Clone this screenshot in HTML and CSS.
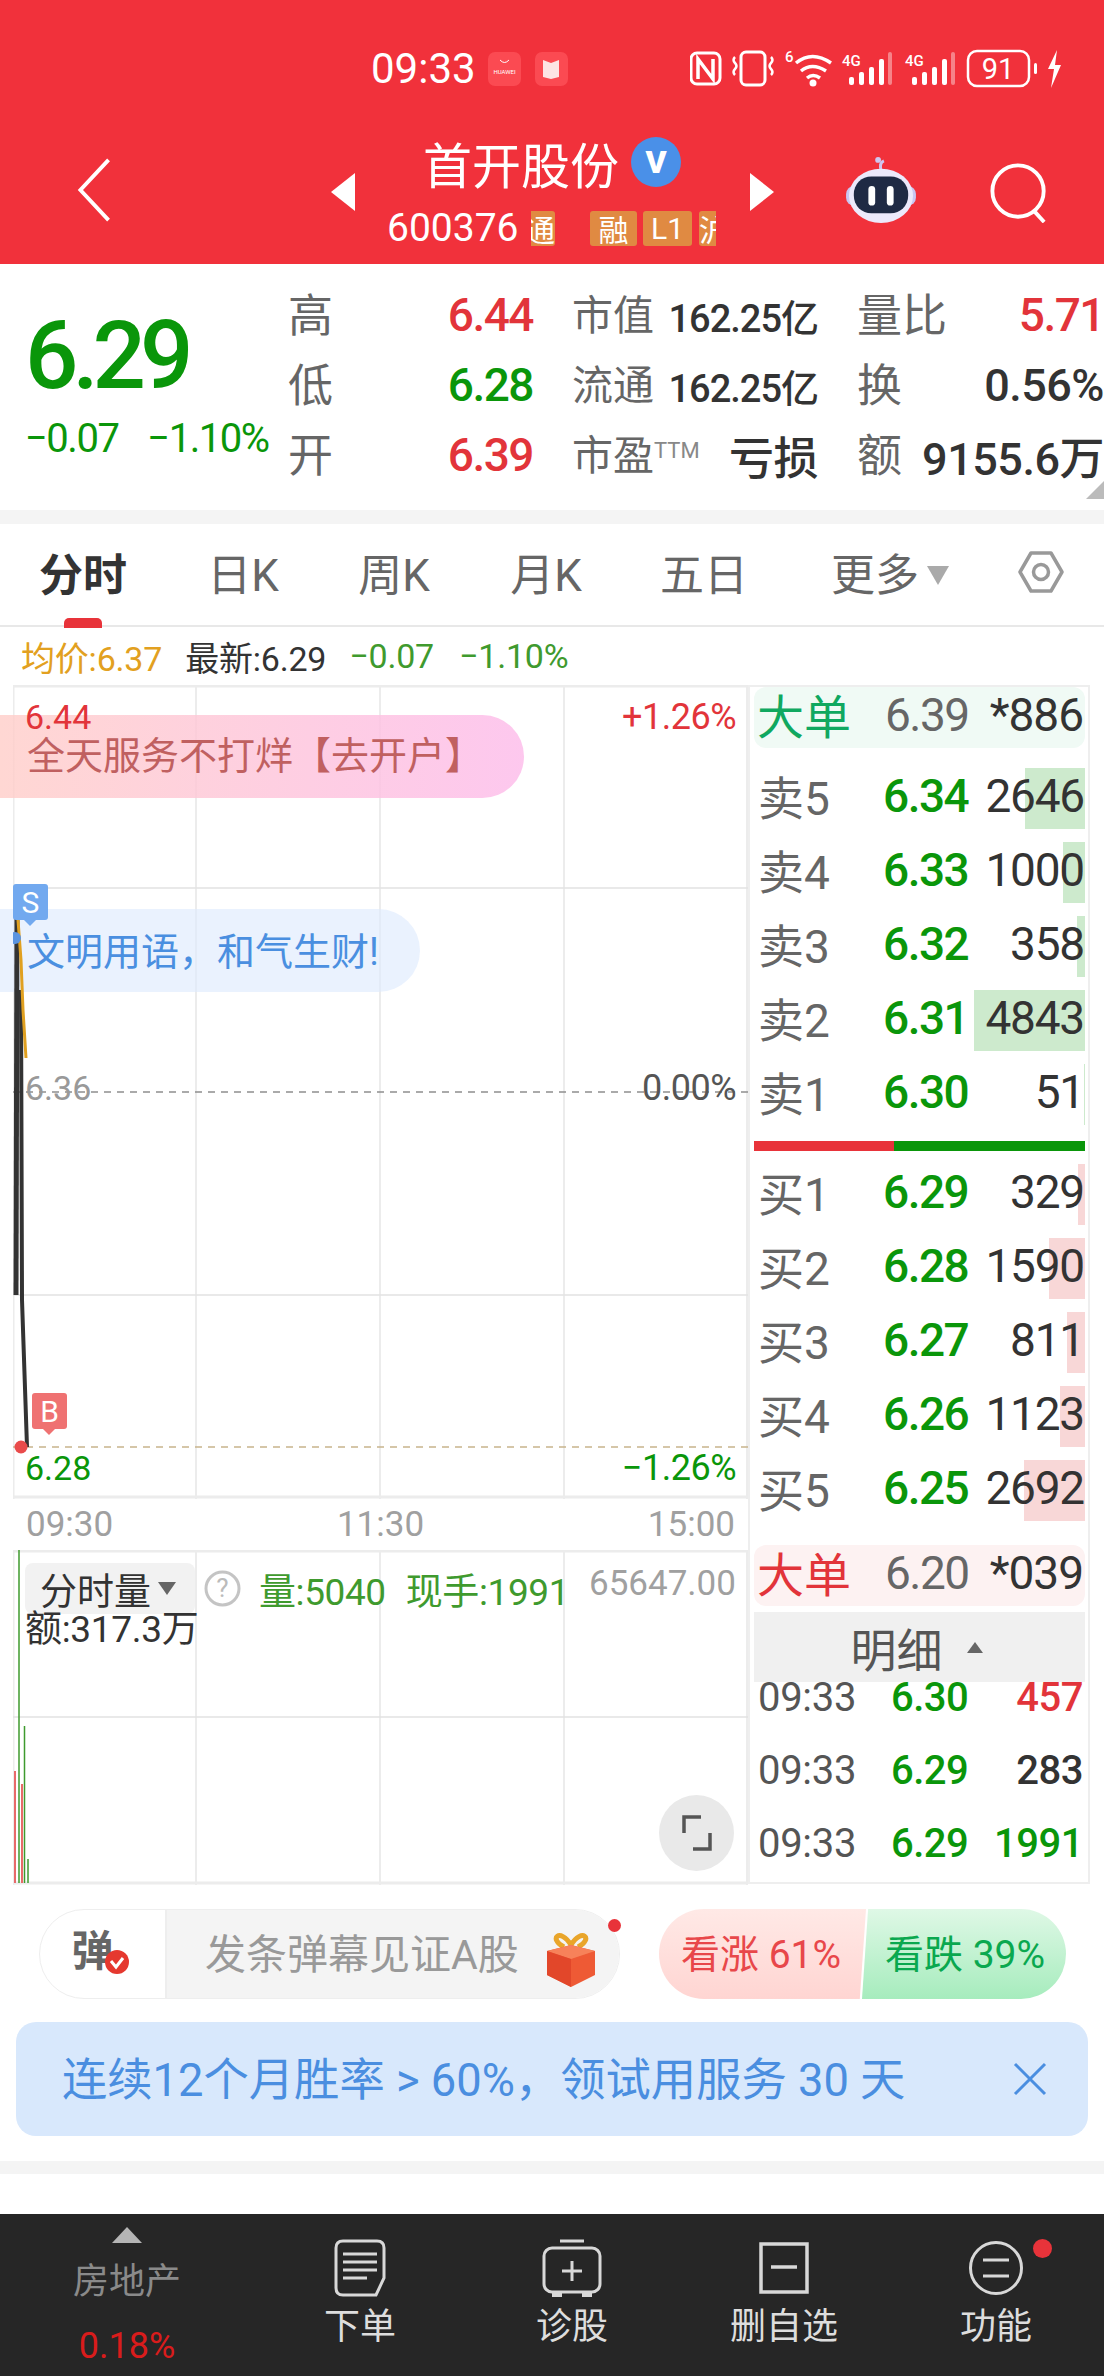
FILE: index.html
```html
<!DOCTYPE html>
<html lang="zh-CN">
<head>
    <meta charset="UTF-8">
    <meta name="viewport" content="width=device-width, initial-scale=1.0">
    <title>首开股份</title>
    <link rel="stylesheet" href="styles.css">
</head>
<body>
    <header class="header">
        <div class="status-bar">
            <span class="clock">09:33</span>
            <svg class="app-icon" width="33" height="34" viewBox="0 0 33 34">
                <rect width="33" height="34" rx="7" fill="#fb4a52"/>
                <path d="M12 8q4.500 5 9 0" fill="none" stroke="#fff" stroke-width="1"/>
                <text x="16.500" y="22" class="tiny" text-anchor="middle">HUAWEI</text>
            </svg>
            <svg class="app-icon" width="33" height="34" viewBox="0 0 33 34">
                <rect width="33" height="34" rx="7" fill="#fb4a52"/>
                <path d="M8 8l8 3 8-3v17l-8 2-8-2z" fill="#fde4e4"/>
            </svg>
            <svg class="status-icons" width="376" height="44" viewBox="690 48 376 44">
                <g fill="none" stroke="#fff">
                    <rect x="691" y="54" width="29" height="31" rx="6" stroke-width="3"/>
                    <path d="M698 80V60l15 20V60" stroke-width="3.500"/>
                    <rect x="741" y="53" width="24" height="33" rx="5" stroke-width="3"/>
                    <path d="M735 58q-3 3 0 6t0 6q-3 3 0 6M771 58q3 3 0 6t0 6q3 3 0 6" stroke-width="2.500"/>
                    <path d="M796 64q16-13 35 0M801 72q11-9 25 0M807 79q6-5 13 0" stroke-width="3.500"/>
                    <rect x="968" y="52" width="61" height="35" rx="9" stroke-width="2.500"/>
                </g>
                <circle cx="813" cy="84" r="3.500" fill="#fff"/>
                <text x="785" y="63" class="status-small">6</text>
                <text x="842" y="67" class="status-small">4G</text>
                <text x="905" y="67" class="status-small">4G</text>
                <g fill="#fff">
                    <rect x="849" y="78" width="5" height="8" rx="2"/>
                    <rect x="859" y="73" width="5" height="13" rx="2"/>
                    <rect x="869" y="68" width="5" height="18" rx="2"/>
                    <rect x="879" y="60" width="5" height="26" rx="2"/>
                    <rect x="912" y="78" width="5" height="8" rx="2"/>
                    <rect x="922" y="73" width="5" height="13" rx="2"/>
                    <rect x="932" y="68" width="5" height="18" rx="2"/>
                    <rect x="942" y="60" width="5" height="26" rx="2"/>
                    <rect x="1034" y="64" width="3" height="11" rx="1.500"/>
                    <path d="M1057 51l-9 19h6l-3 19 10-23h-6z"/>
                </g>
                <rect x="888" y="53" width="4" height="33" rx="2" fill="#fff" opacity=".4"/>
                <rect x="951" y="53" width="4" height="33" rx="2" fill="#fff" opacity=".4"/>
                <text x="998" y="80" class="status-batt" text-anchor="middle">91</text>
            </svg>
        </div>
        <div class="nav">
            <svg class="nav-back" width="34" height="64" viewBox="0 0 34 66">
                <path d="M32 2L3 33l29 31" fill="none" stroke="#fff" stroke-width="4"/>
            </svg>
            <span class="tri-left"></span>
            <div class="stock">
                <div class="stock-name">首开股份
                    <span class="v-badge">V</span>
                </div>
                <div class="stock-code">
                    <span class="code">600376</span>
                    <span class="tag tag-cut">通</span>
                    <span class="tag tag-rong">融</span>
                    <span class="tag tag-l1">L1</span>
                    <span class="tag tag-end">沪</span>
                </div>
            </div>
            <span class="tri-right"></span>
            <svg class="robot" width="72" height="66" viewBox="0 0 72 68">
                <path d="M36 14q-2-8 3-10" fill="none" stroke="#cfc6ef" stroke-width="3"/>
                <circle cx="33" cy="3" r="3" fill="#cfc6ef"/>
                <rect x="0" y="30" width="72" height="20" rx="8" fill="#c9c6f2"/>
                <ellipse cx="36" cy="40" rx="33" ry="28" fill="#ece9fb"/>
                <rect x="8" y="20" width="56" height="38" rx="18" fill="#1f2a44"/>
                <rect x="23" y="30" width="7" height="20" rx="3.500" fill="#fff"/>
                <rect x="42" y="30" width="7" height="20" rx="3.500" fill="#fff"/>
            </svg>
            <svg class="search" width="60" height="60" viewBox="0 0 60 62">
                <circle cx="29" cy="29" r="26.500" fill="none" stroke="#fff" stroke-width="4"/>
                <path d="M45 49l11 12" stroke="#fff" stroke-width="4"/>
            </svg>
        </div>
    </header>

    <section class="quote">
        <div class="quote-main">
            <div class="last-price">6.29</div>
            <div class="last-change"><span>−0.07</span><span>−1.10%</span></div>
        </div>
        <div class="quote-grid">
            <div class="cell"><span class="lbl big">高</span><span class="up">6.44</span></div>
            <div class="cell"><span class="lbl">市值</span><span class="val">162.25亿</span></div>
            <div class="cell"><span class="lbl big">量比</span><span class="up">5.71</span></div>
            <div class="cell"><span class="lbl big">低</span><span class="down">6.28</span></div>
            <div class="cell"><span class="lbl">流通</span><span class="val">162.25亿</span></div>
            <div class="cell"><span class="lbl big">换</span><span class="val wide">0.56%</span></div>
            <div class="cell"><span class="lbl big">开</span><span class="up">6.39</span></div>
            <div class="cell"><span class="lbl">市盈<sup class="ttm">TTM</sup></span><span class="val wide">亏损</span></div>
            <div class="cell"><span class="lbl big">额</span><span class="val wide">9155.6万</span></div>
        </div>
        <span class="corner"></span>
    </section>

    <nav class="tabs">
        <span class="tab tab-on">分时</span>
        <span class="tab">日K</span>
        <span class="tab">周K</span>
        <span class="tab">月K</span>
        <span class="tab">五日</span>
        <span class="tab tab-more">更多<i class="caret"></i></span>
        <svg class="tab-gear" width="46" height="46" viewBox="0 0 46 46">
            <path d="M13 4h20l11 19-11 19H13L2 23z" fill="none" stroke="#999" stroke-width="3.500" stroke-linejoin="round"/>
            <circle cx="23" cy="23" r="7.500" fill="none" stroke="#999" stroke-width="3.500"/>
        </svg>
    </nav>

    <div class="legend">
        <span class="avg">均价:6.37</span>
        <span class="latest">最新:6.29</span>
        <span class="down">−0.07</span>
        <span class="down">−1.10%</span>
    </div>

    <main class="market">
        <div class="charts">
            <div class="price-chart">
                <svg class="plot" width="735" height="814" viewBox="13 685 735 814">
                    <path d="M13.500 685v814M196 685v814M380 685v814M564 685v814M747 685v814" stroke="#ececec" stroke-width="2"/>
                    <path d="M13 686h735M13 1497h735" stroke="#ececec" stroke-width="3"/>
                    <path d="M13 888h735M13 1295h735" stroke="#e2e2e2" stroke-width="1.500"/>
                    <path d="M13 1092h735" stroke="#8f8f8f" stroke-width="1.500" stroke-dasharray="7 6"/>
                    <path d="M13 1447h735" stroke="#c8b48c" stroke-width="1.500" stroke-dasharray="7 6"/>
                </svg>
                <div class="promo promo-pink">全天服务不打烊【去开户】</div>
                <div class="promo promo-blue">文明用语，和气生财!</div>
                <span class="pl pl-hi up">6.44</span>
                <span class="pr pr-hi up">+1.26%</span>
                <svg class="plot" width="735" height="814" viewBox="13 685 735 814">
                    <path d="M17 905l-1 390" fill="none" stroke="#333" stroke-width="5"/>
                    <path d="M21 990l1 310 5 147" fill="none" stroke="#333" stroke-width="4"/>
                    <path d="M18 920l3 40 2 50 3 48" fill="none" stroke="#e0a020" stroke-width="3"/>
                    <circle cx="15" cy="938" r="6" fill="#5b94e0"/>
                    <circle cx="21" cy="1447" r="6.500" fill="#e94b4b"/>
                </svg>
                <span class="flag flag-s">S</span>
                <span class="flag flag-b">B</span>
                <span class="pl pl-mid">6.36</span>
                <span class="pr pr-mid">0.00%</span>
                <span class="pl pl-lo down">6.28</span>
                <span class="pr pr-lo down">−1.26%</span>
            </div>
            <div class="times"><span>09:30</span><span>11:30</span><span>15:00</span></div>
            <div class="vol-chart">
                <svg class="plot" width="735" height="335" viewBox="13 1549 735 335">
                    <path d="M13.500 1549v335M196 1549v335M380 1549v335M564 1549v335M747 1549v335" stroke="#ececec" stroke-width="2"/>
                    <path d="M13 1550h735M13 1882h735" stroke="#ececec" stroke-width="3"/>
                    <path d="M13 1716h735" stroke="#e2e2e2" stroke-width="1.500"/>
                    <path d="M15 1770v112M22 1783v99" stroke="#e86a6a" stroke-width="2"/>
                    <path d="M19 1549v333M24.500 1725v157M28 1858v24" stroke="#3f9a2e" stroke-width="1.500"/>
                </svg>
                <div class="vol-head">
                    <span class="vol-select">分时量<i class="caret dark"></i></span>
                    <svg class="help" width="37" height="37" viewBox="0 0 37 37">
                        <circle cx="18.500" cy="18.500" r="16.500" fill="none" stroke="#c4c4c4" stroke-width="3"/>
                        <text x="18.500" y="27" class="help-mark" text-anchor="middle">?</text>
                    </svg>
                    <span class="vol-val">量:5040</span>
                    <span class="vol-val">现手:1991</span>
                    <span class="vol-max">65647.00</span>
                </div>
                <div class="vol-amt">额:317.3万</div>
                <span class="expand">
                    <svg width="30" height="36" viewBox="0 0 30 36">
                        <path d="M2 18V2h17M28 18v16H11" fill="none" stroke="#555" stroke-width="3.500"/>
                    </svg>
                </span>
            </div>
        </div>

        <aside class="book">
            <div class="big-order big-green"><span class="big-lbl">大单</span><span class="big-px">6.39</span><span class="big-qty">*886</span></div>
            <div class="levels sell">
                <div class="level"><span>卖5</span><b>6.34</b><em><i style="width:60px"></i>2646</em></div>
                <div class="level"><span>卖4</span><b>6.33</b><em><i style="width:22px"></i>1000</em></div>
                <div class="level"><span>卖3</span><b>6.32</b><em><i style="width:8px"></i>358</em></div>
                <div class="level"><span>卖2</span><b>6.31</b><em><i style="width:111px"></i>4843</em></div>
                <div class="level"><span>卖1</span><b>6.30</b><em><i style="width:1px"></i>51</em></div>
            </div>
            <div class="ratio"><span class="ratio-red"></span><span class="ratio-green"></span></div>
            <div class="levels buy">
                <div class="level"><span>买1</span><b>6.29</b><em><i style="width:7px"></i>329</em></div>
                <div class="level"><span>买2</span><b>6.28</b><em><i style="width:36px"></i>1590</em></div>
                <div class="level"><span>买3</span><b>6.27</b><em><i style="width:18px"></i>811</em></div>
                <div class="level"><span>买4</span><b>6.26</b><em><i style="width:25px"></i>1123</em></div>
                <div class="level"><span>买5</span><b>6.25</b><em><i style="width:61px"></i>2692</em></div>
            </div>
            <div class="big-order big-red"><span class="big-lbl">大单</span><span class="big-px">6.20</span><span class="big-qty">*039</span></div>
            <div class="detail-head">明细<i class="caret-up"></i></div>
            <div class="trades">
                <div class="trade"><span>09:33</span><b>6.30</b><em class="up">457</em></div>
                <div class="trade"><span>09:33</span><b>6.29</b><em class="val">283</em></div>
                <div class="trade"><span>09:33</span><b>6.29</b><em class="down">1991</em></div>
            </div>
        </aside>
    </main>

    <div class="action-row">
        <div class="danmaku">
            <span class="dm-left">弹
                <svg class="dm-check" width="24" height="24" viewBox="0 0 24 24">
                    <circle cx="12" cy="12" r="12" fill="#e5382f"/>
                    <path d="M6 11l5 6 7-9" fill="none" stroke="#fff" stroke-width="3"/>
                </svg>
            </span>
            <span class="dm-input"><span class="dm-text">发条弹幕见证A股</span>
                <svg class="gift" width="50" height="54" viewBox="0 0 50 54">
                    <path d="M25 12C14-6 2 6 18 14M25 12C36-6 48 6 32 14" fill="none" stroke="#e9a52a" stroke-width="5"/>
                    <path d="M1 18l24-6 24 6v24L25 54 1 42z" fill="#ee5a35"/>
                    <path d="M1 18l24 8 24-8-24-6z" fill="#f7825a"/>
                    <path d="M25 26v28L1 42V18z" fill="#e2472a"/>
                </svg>
            </span>
            <span class="dm-dot"></span>
        </div>
        <div class="vote">
            <span class="vote-up">看涨 61%</span>
            <span class="vote-down">看跌 39%</span>
        </div>
    </div>

    <div class="notice">
        <span>连续12个月胜率 &gt; 60%，领试用服务 30 天</span>
        <svg width="34" height="34" viewBox="0 0 34 34">
            <path d="M2 2l30 30M32 2L2 32" stroke="#4a8ee0" stroke-width="3"/>
        </svg>
    </div>

    <div class="band"></div>

    <footer class="footer">
        <div class="sector">
            <i class="sector-tri"></i>
            <span class="sector-name">房地产</span>
            <span class="sector-pct">0.18%</span>
        </div>
        <div class="foot-item">
            <svg width="52" height="58" viewBox="0 0 52 58">
                <path d="M9 2h34q7 0 7 7v30l-8 17H9q-7 0-7-7V9q0-7 7-7z" fill="none" stroke="#d8d8d8" stroke-width="3"/>
                <path d="M9 15h34M9 23h34M9 31h34M9 39h24" stroke="#d8d8d8" stroke-width="3"/>
            </svg>
            <span>下单</span>
        </div>
        <div class="foot-item">
            <svg width="60" height="58" viewBox="0 0 60 58">
                <path d="M18 2h24" stroke="#d8d8d8" stroke-width="3"/>
                <rect x="2" y="9" width="56" height="44" rx="8" fill="none" stroke="#d8d8d8" stroke-width="3"/>
                <path d="M30 22v20M20 32h20" stroke="#d8d8d8" stroke-width="3"/>
                <path d="M10 52h10v6H10zM40 52h10v6H40z" fill="#d8d8d8"/>
            </svg>
            <span>诊股</span>
        </div>
        <div class="foot-item">
            <svg width="50" height="52" viewBox="0 0 50 52">
                <rect x="2" y="2" width="46" height="48" fill="none" stroke="#d8d8d8" stroke-width="3.500"/>
                <path d="M12 25h26" stroke="#d8d8d8" stroke-width="3.500"/>
            </svg>
            <span>删自选</span>
        </div>
        <div class="foot-item foot-dot">
            <svg width="54" height="56" viewBox="0 0 54 56">
                <circle cx="27" cy="28" r="25.500" fill="none" stroke="#d8d8d8" stroke-width="3"/>
                <path d="M14 20h26M14 36h26" stroke="#d8d8d8" stroke-width="3"/>
            </svg>
            <span>功能</span>
        </div>
    </footer>
</body>
</html>
```

FILE: styles.css
```css
* {
    box-sizing: border-box;
}
html, body {
    margin: 0;
    padding: 0;
}
body {
    width: 1104px;
    height: 2376px;
    overflow: hidden;
    background: white;
    color: #333;
    font-family: Roboto, "Noto Sans CJK SC", sans-serif;
    font-size: 42px;
}
i, em, b {
    font-style: normal;
    font-weight: normal;
}
.up {
    color: #e2343a;
}
.down {
    color: #0a960a;
}
.val {
    color: #333;
}

/* header */
.header {
    height: 264px;
    background: #f1313b;
    color: white;
    padding-top: 47px;
}
.status-bar {
    display: flex;
    align-items: center;
    height: 43px;
    padding-left: 371px;
}
.clock {
    font-size: 42px;
    width: 117px;
}
.app-icon {
    margin-right: 14px;
}
.status-icons {
    margin-left: 108px;
}
.tiny {
    font-size: 6px;
    fill: white;
}
.status-small {
    font-size: 15px;
    font-weight: 500;
    fill: white;
}
.status-batt {
    font-size: 29px;
    fill: white;
}
.nav {
    display: flex;
    align-items: flex-start;
    height: 174px;
    padding-left: 77px;
}
.nav-back {
    margin-right: 220px;
    margin-top: 68px;
}
.tri-left, .tri-right {
    width: 0;
    height: 0;
    border-top: 19px solid transparent;
    border-bottom: 19px solid transparent;
    margin-top: 83px;
}
.tri-left {
    border-right: 24px solid white;
}
.tri-right {
    border-left: 24px solid white;
    margin-left: 34px;
    margin-right: 71px;
}
.stock {
    width: 361px;
    margin-top: 37px;
}
.stock-name {
    display: flex;
    align-items: center;
    gap: 12px;
    height: 70px;
    margin-left: 68px;
    font-size: 49px;
    white-space: nowrap;
}
.v-badge {
    display: flex;
    align-items: center;
    justify-content: center;
    width: 50px;
    height: 50px;
    border-radius: 50%;
    background: #4a90e8;
    font-size: 32px;
    font-weight: 900;
}
.stock-code {
    display: flex;
    align-items: center;
    height: 38px;
    margin-top: 12px;
    margin-left: 32px;
}
.code {
    font-size: 39px;
    width: 144px;
}
.tag {
    display: flex;
    align-items: center;
    justify-content: center;
    height: 35px;
    background: #e08a42;
    border-radius: 3px;
    font-size: 30px;
    overflow: hidden;
}
.tag-cut {
    width: 24px;
    justify-content: flex-end;
    margin-right: 35px;
    border-radius: 0 3px 3px 0;
}
.tag-rong {
    width: 47px;
    margin-right: 6px;
}
.tag-l1 {
    width: 49px;
    margin-right: 7px;
}
.tag-end {
    width: 17px;
    justify-content: flex-start;
    border-radius: 3px 0 0 3px;
}
.robot {
    margin-top: 67px;
    margin-right: 72px;
}
.search {
    margin-top: 73px;
}

/* quote block */
.quote {
    position: relative;
    display: flex;
    height: 246px;
    padding-top: 16px;
}
.quote-main {
    width: 288px;
    padding-left: 25px;
}
.last-price {
    color: #0a960a;
    font-size: 94px;
    font-weight: 500;
    letter-spacing: -6px;
    line-height: 100px;
    margin-top: 26px;
}
.last-change {
    display: flex;
    gap: 29px;
    color: #0a960a;
    font-size: 40px;
    line-height: 50px;
    margin-top: 8px;
    letter-spacing: -1.5px;
    white-space: nowrap;
}
.quote-grid {
    display: grid;
    grid-template-columns: 245px 246px 247px;
    grid-auto-rows: 70px;
    column-gap: 39px;
}
.cell {
    display: flex;
    align-items: center;
    justify-content: space-between;
    white-space: nowrap;
}
.cell .up, .cell .down {
    font-size: 46px;
    font-weight: 500;
    letter-spacing: -1.5px;
}
.lbl {
    color: #666;
    font-size: 41px;
    margin-bottom: 6px;
}
.lbl.big {
    font-size: 45px;
}
.val {
    font-size: 38px;
    font-weight: 500;
    letter-spacing: -1px;
}
.val.wide {
    font-size: 45px;
    letter-spacing: -.5px;
}
.ttm {
    font-size: 22px;
    vertical-align: 12px;
    line-height: 0;
    color: #888;
}
.corner {
    position: absolute;
    right: 0;
    bottom: 11px;
    width: 0;
    height: 0;
    border-left: 18px solid transparent;
    border-bottom: 18px solid #bbb;
}

/* tabs */
.tabs {
    position: relative;
    display: flex;
    align-items: center;
    height: 117px;
    border-top: 14px solid #f4f4f4;
    border-bottom: 2px solid #e8e8e8;
    padding-bottom: 5px;
}
.tab {
    position: absolute;
    transform: translateX(-50%);
    color: #666;
    font-size: 44px;
    white-space: nowrap;
}
.tab:nth-child(1) { left: 83px; }
.tab:nth-child(2) { left: 243px; }
.tab:nth-child(3) { left: 394px; }
.tab:nth-child(4) { left: 546px; }
.tab:nth-child(5) { left: 704px; }
.tab:nth-child(6) { left: 890px; }
.tab-on {
    color: #333;
    font-weight: 700;
    font-size: 44px;
}
.tab-on::after {
    content: "";
    position: absolute;
    left: 50%;
    transform: translateX(-50%);
    bottom: -24px;
    width: 38px;
    height: 10px;
    border-radius: 5px 5px 0 0;
    background: #e8333a;
}
.caret {
    display: inline-block;
    width: 0;
    height: 0;
    margin-left: 8px;
    border-left: 11px solid transparent;
    border-right: 11px solid transparent;
    border-top: 19px solid #aaa;
    vertical-align: 6px;
}
.tab-gear {
    position: absolute;
    left: 1018px;
}

/* legend */
.legend {
    display: flex;
    align-items: center;
    height: 58px;
    padding-left: 21px;
    font-size: 34px;
    white-space: nowrap;
    letter-spacing: -.2px;
}
.avg {
    color: #e2a020;
    margin-right: 23px;
}
.latest {
    color: #333;
    margin-right: 23px;
}
.legend .down {
    color: #3f9a2e;
    margin-right: 25px;
}

/* charts */
.market {
    display: flex;
    height: 1199px;
    padding-left: 13px;
}
.charts {
    width: 735px;
}
.price-chart {
    position: relative;
    height: 814px;
}
.plot {
    position: absolute;
    left: 0;
    top: 0;
}
.pl, .pr {
    position: absolute;
    font-size: 34px;
    line-height: 40px;
}
.pl {
    left: 12px;
}
.pr {
    right: 12px;
    font-size: 36px;
    letter-spacing: -.5px;
}
.pl-hi, .pr-hi {
    top: 12px;
}
.pl-mid {
    top: 383px;
    color: #999;
}
.pr-mid {
    top: 383px;
    color: #555;
}
.pl-lo, .pr-lo {
    top: 763px;
}
.promo {
    position: absolute;
    left: -13px;
    display: flex;
    align-items: center;
    height: 83px;
    padding-left: 27px;
    font-size: 38px;
    white-space: nowrap;
    border-radius: 0 42px 42px 0;
}
.promo-pink {
    top: 30px;
    width: 524px;
    padding-bottom: 8px;
    color: #c06060;
    background: linear-gradient(to right, rgba(255, 205, 200, .8), rgba(253, 190, 235, .85));
}
.promo-blue {
    top: 224px;
    width: 420px;
    padding-bottom: 5px;
    color: #4a8fe0;
    background: rgba(222, 235, 253, .65);
}
.flag {
    position: absolute;
    display: flex;
    align-items: center;
    justify-content: center;
    width: 35px;
    height: 36px;
    color: white;
    font-size: 30px;
    border-radius: 3px;
}
.flag::after {
    content: "";
    position: absolute;
    left: 11px;
    bottom: -6px;
    border-left: 6px solid transparent;
    border-right: 6px solid transparent;
    border-top: 6px solid transparent;
}
.flag-s {
    left: 0;
    top: 199px;
    background: #72a9ef;
}
.flag-s::after {
    border-top-color: #72a9ef;
}
.flag-b {
    left: 19px;
    top: 708px;
    background: #ef7272;
}
.flag-b::after {
    border-top-color: #ef7272;
}
.times {
    display: flex;
    justify-content: space-between;
    align-items: center;
    height: 51px;
    padding: 0 13px;
    color: #a0a0a0;
    font-size: 35px;
}
.vol-chart {
    position: relative;
    height: 335px;
}
.vol-head {
    position: relative;
    display: flex;
    align-items: center;
    height: 51px;
    top: 13px;
    left: 12px;
    white-space: nowrap;
}
.vol-select {
    display: flex;
    align-items: center;
    width: 170px;
    height: 51px;
    padding-left: 15px;
    background: #f2f2f2;
    border-radius: 8px;
    font-size: 37px;
    color: #333;
}
.caret.dark {
    border-left-width: 9px;
    border-right-width: 9px;
    border-top: 13px solid #666;
    vertical-align: 0;
    margin-left: 7px;
}
.help {
    margin: 0 18px 0 9px;
}
.help-mark {
    font-size: 26px;
    fill: #bbb;
}
.vol-val {
    color: #3f9a2e;
    font-size: 37px;
    margin-right: 20px;
    letter-spacing: -.4px;
}
.vol-max {
    position: absolute;
    left: 564px;
    top: 0;
    color: #a0a0a0;
    font-size: 35px;
}
.vol-amt {
    position: relative;
    left: 12px;
    top: 11px;
    font-size: 37px;
    line-height: 36px;
    letter-spacing: -.3px;
}
.expand {
    position: absolute;
    left: 646px;
    top: 245px;
    display: flex;
    align-items: center;
    justify-content: center;
    width: 75px;
    height: 76px;
    border-radius: 50%;
    background: #e9e9e9;
}

/* order book */
.book {
    width: 342px;
    height: 1199px;
    border: 2px solid #eee;
    padding: 0 3px 0 4px;
    font-size: 46px;
    overflow: hidden;
}
.big-order {
    display: flex;
    align-items: center;
    height: 61px;
    padding: 0 2px 0 3px;
    border-radius: 12px;
}
.big-green {
    background: #f0faf5;
}
.big-red {
    background: #fdf2f2;
    margin-top: 24px;
}
.big-lbl {
    font-size: 47px;
    width: 128px;
    margin-bottom: 8px;
}
.big-green .big-lbl {
    color: #10a860;
}
.big-red .big-lbl {
    color: #e2343a;
}
.big-px {
    color: #666;
    letter-spacing: -1.5px;
    margin-bottom: 5px;
}
.big-qty {
    color: #333;
    flex: 1;
    text-align: right;
    letter-spacing: -1px;
    margin-bottom: 5px;
}
.levels {
    display: flex;
    flex-direction: column;
    gap: 13px;
    margin-top: 20px;
}
.buy {
    margin-top: 13px;
}
.level {
    display: flex;
    align-items: center;
    height: 61px;
    white-space: nowrap;
}
.level span {
    width: 129px;
    padding-left: 4px;
    color: #666;
    margin-bottom: 8px;
}
.level b {
    color: #0a960a;
    font-weight: 500;
    width: 92px;
    letter-spacing: -1.5px;
    margin-bottom: 5px;
}
.level em {
    position: relative;
    display: flex;
    align-items: center;
    justify-content: flex-end;
    flex: 1;
    height: 61px;
    padding: 0 1px 5px 0;
    color: #333;
    letter-spacing: -1.2px;
}
.level em i {
    position: absolute;
    right: 0;
    top: 0;
    bottom: 0;
    z-index: -1;
}
.sell em i {
    background: #cdeacd;
}
.buy em i {
    background: #f8d7d7;
}
.ratio {
    display: flex;
    height: 10px;
    margin-top: 16px;
}
.ratio-red {
    width: 140px;
    background: #e8333a;
}
.ratio-green {
    flex: 1;
    background: #0a960a;
}
.detail-head {
    display: flex;
    align-items: center;
    justify-content: center;
    height: 70px;
    margin-top: 6px;
    padding-right: 6px;
    background: #f0f0f0;
    color: #555;
    font-size: 46px;
}
.caret-up {
    width: 0;
    height: 0;
    margin-left: 24px;
    border-left: 8px solid transparent;
    border-right: 8px solid transparent;
    border-bottom: 11px solid #666;
}
.trades {
    height: 200px;
    overflow: hidden;
}
.trade {
    display: flex;
    align-items: center;
    justify-content: space-between;
    height: 73px;
    padding: 0 2px 0 4px;
    font-size: 40px;
}
.trade:first-child {
    margin-top: -21px;
}
.trade span {
    color: #555;
    width: 133px;
    letter-spacing: -.3px;
}
.trade b {
    color: #0a960a;
    font-weight: 500;
    flex: 1;
    letter-spacing: -.5px;
}
.trade em {
    font-size: 40px;
    font-weight: 500;
    letter-spacing: -.5px;
}

/* danmaku and votes */
.action-row {
    display: flex;
    height: 90px;
    margin-top: 25px;
    padding-left: 39px;
}
.danmaku {
    position: relative;
    display: flex;
    width: 581px;
    height: 90px;
    border: 1.500px solid #eee;
    border-radius: 45px;
    margin-right: 39px;
}
.dm-left {
    position: relative;
    display: flex;
    align-items: center;
    justify-content: center;
    width: 127px;
    padding: 0 20px 14px 0;
    color: #666;
    font-size: 42px;
    font-weight: 700;
    border-right: 2px solid #eee;
}
.dm-check {
    position: absolute;
    left: 65px;
    top: 40px;
}
.dm-input {
    display: flex;
    align-items: center;
    flex: 1;
    padding-left: 38px;
    background: #f4f4f4;
    border-radius: 0 45px 45px 0;
    color: #999;
    font-size: 41px;
    white-space: nowrap;
}
.dm-text {
    margin-bottom: 6px;
}
.gift {
    margin-left: 27px;
    margin-top: 12px;
    flex: none;
}
.dm-dot {
    position: absolute;
    right: -2px;
    top: 9px;
    width: 13px;
    height: 13px;
    border-radius: 50%;
    background: #e8333a;
}
.vote {
    position: relative;
    display: flex;
    width: 407px;
    height: 90px;
    border-radius: 45px;
    overflow: hidden;
    font-size: 39px;
    white-space: nowrap;
}
.vote span {
    display: flex;
    align-items: center;
    height: 90px;
    padding-bottom: 6px;
}
.vote-up {
    width: 207px;
    padding-left: 22px;
    color: #e8474a;
    background: linear-gradient(#ffe9e6, #ffd5d2);
    clip-path: polygon(0 0, 100% 0, 97% 100%, 0 100%);
}
.vote-down {
    width: 204px;
    margin-left: -4px;
    padding-left: 23px;
    color: #0aa84f;
    background: linear-gradient(#dff8e6, #a6ecbd);
    clip-path: polygon(3% 0, 100% 0, 100% 100%, 0 100%);
}

/* notice */
.notice {
    display: flex;
    align-items: center;
    justify-content: space-between;
    width: 1072px;
    height: 114px;
    margin: 23px 0 0 16px;
    padding: 0 41px 0 46px;
    background: #d8e8fc;
    border-radius: 20px;
    color: #4a8ee0;
    font-size: 45.300px;
    white-space: nowrap;
}
.notice span {
    margin-bottom: 6px;
}
.band {
    height: 13px;
    margin-top: 25px;
    background: #f4f4f4;
}

/* footer */
.footer {
    display: grid;
    grid-template-columns: 254px repeat(4, 212px);
    height: 162px;
    margin-top: 40px;
    background: #262626;
    color: #ddd;
}
.sector {
    display: flex;
    flex-direction: column;
    align-items: center;
    padding-top: 13px;
}
.sector-tri {
    width: 0;
    height: 0;
    border-left: 15px solid transparent;
    border-right: 15px solid transparent;
    border-bottom: 16px solid #b5b5b5;
}
.sector-name {
    color: #8a8a8a;
    font-size: 36px;
    line-height: 46px;
    margin-top: 16px;
}
.sector-pct {
    color: #d91c1c;
    font-size: 36px;
    line-height: 46px;
    margin-top: 18px;
}
.foot-item {
    position: relative;
    display: flex;
    flex-direction: column;
    align-items: center;
    padding-top: 25px;
    font-size: 36px;
}
.foot-item svg {
    height: 58px;
}
.foot-item span {
    line-height: 46px;
    margin-top: 7px;
}
.foot-dot::after {
    content: "";
    position: absolute;
    left: 143px;
    top: 25px;
    width: 19px;
    height: 19px;
    border-radius: 50%;
    background: #e8333a;
}
```
